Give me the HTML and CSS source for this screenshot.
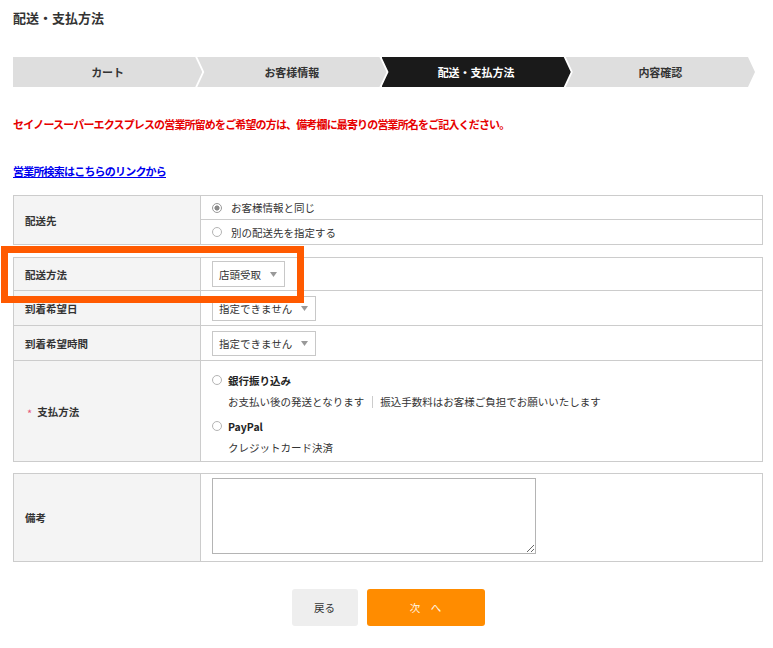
FILE: index.html
```html
<!DOCTYPE html>
<html lang="ja">
<head>
<meta charset="utf-8">
<title>配送・支払方法</title>
<link rel="stylesheet" href="styles.css">
</head>
<body>
<div class="page">
  <h1 class="page-title">配送・支払方法</h1>

  <ol class="steps">
    <li class="step">カート</li>
    <li class="step">お客様情報</li>
    <li class="step is-current">配送・支払方法</li>
    <li class="step">内容確認</li>
  </ol>

  <p class="notice">セイノースーパーエクスプレスの営業所留めをご希望の方は、備考欄に最寄りの営業所名をご記入ください。</p>

  <p class="link-line"><a class="office-link" href="#">営業所検索はこちらのリンクから</a></p>

  <div class="ftable ftable-dest">
    <div class="th">配送先</div>
    <div class="td td-options">
      <label class="opt opt-split"><span class="radio is-checked"></span>お客様情報と同じ</label>
      <label class="opt"><span class="radio"></span>別の配送先を指定する</label>
    </div>
  </div>

  <div class="ftable ftable-main">
    <div class="th">配送方法</div>
    <div class="td">
      <div class="select select-tall"><span>店頭受取</span><svg class="caret" width="7" height="5" viewBox="0 0 7 5"><path d="M0 0h7L3.5 5z" fill="#999"/></svg></div>
    </div>
    <div class="th">到着希望日</div>
    <div class="td">
      <div class="select"><span>指定できません</span><svg class="caret" width="7" height="5" viewBox="0 0 7 5"><path d="M0 0h7L3.5 5z" fill="#999"/></svg></div>
    </div>
    <div class="th">到着希望時間</div>
    <div class="td">
      <div class="select"><span>指定できません</span><svg class="caret" width="7" height="5" viewBox="0 0 7 5"><path d="M0 0h7L3.5 5z" fill="#999"/></svg></div>
    </div>
    <div class="th"><span class="req">*</span>支払方法</div>
    <div class="td td-pay">
      <div class="pay">
        <label class="pay-title"><span class="radio"></span>銀行振り込み</label>
        <p class="pay-desc">お支払い後の発送となります<span class="sep"></span>振込手数料はお客様ご負担でお願いいたします</p>
      </div>
      <div class="pay">
        <label class="pay-title"><span class="radio"></span>PayPal</label>
        <p class="pay-desc">クレジットカード決済</p>
      </div>
    </div>
  </div>

  <div class="ftable ftable-note">
    <div class="th">備考</div>
    <div class="td td-note"><textarea class="note"></textarea></div>
  </div>

  <div class="actions">
    <button class="btn btn-back" type="button">戻る</button>
    <button class="btn btn-next" type="button">次　へ</button>
  </div>

  <div class="highlight"></div>
</div>
</body>
</html>
```

FILE: styles.css
```css
html, body {
  margin: 0;
  padding: 0;
  background: #fff;
}

body {
  font-family: "Noto Sans CJK JP", "Noto Sans", sans-serif;
  font-size: 10.5px;
  color: #333;
}

.page {
  position: relative;
  padding: 0 10px 40px 13px;
}

.page-title {
  margin: 0;
  padding-top: 8px;
  font-size: 13px;
  line-height: 20px;
  font-weight: bold;
  color: #333;
}

/* steps */
.steps {
  list-style: none;
  display: flex;
  height: 30px;
  margin: 29px 8px 0 0;
  padding: 0;
}

.step {
  flex: 1;
  display: flex;
  align-items: center;
  justify-content: center;
  margin-left: -5px;
  background: #dedede;
  color: #333;
  font-weight: bold;
  font-size: 11px;
  clip-path: polygon(0 0, calc(100% - 7px) 0, 100% 50%, calc(100% - 7px) 100%, 0 100%, 7px 50%);
}

.step:first-child {
  margin-left: 0;
  clip-path: polygon(0 0, calc(100% - 7px) 0, 100% 50%, calc(100% - 7px) 100%, 0 100%);
}

.step.is-current {
  background: #1a1a1a;
  color: #fff;
}

/* notice & link */
.notice {
  margin: 29px 0 0;
  font-size: 11px;
  line-height: 16px;
  font-weight: bold;
  color: #e60000;
  letter-spacing: -0.85px;
  white-space: nowrap;
}

.link-line {
  margin: 31px 0 0;
  font-size: 11px;
  line-height: 16px;
}

.office-link {
  color: #0000ee;
  font-weight: bold;
  letter-spacing: -0.8px;
  text-decoration: underline;
}

/* form tables */
.ftable {
  display: grid;
  grid-template-columns: 187px 1fr;
  border: 1px solid #ccc;
  border-bottom: none;
}

.ftable-dest {
  margin-top: 16px;
  grid-template-rows: 49px;
}

.ftable-main {
  margin-top: 12px;
  grid-template-rows: 33px 35px 35px 101px;
}

.ftable-note {
  margin-top: 11px;
  grid-template-rows: 88px;
}

.th,
.td {
  box-sizing: border-box;
  border-bottom: 1px solid #ccc;
}

.th {
  display: flex;
  align-items: center;
  padding-left: 11px;
  background: #f4f4f4;
  border-right: 1px solid #ccc;
  font-weight: bold;
  color: #333;
}

.td {
  display: flex;
  align-items: center;
  padding-left: 11px;
}

.td-options {
  flex-direction: column;
  align-items: stretch;
  padding-left: 0;
}

.opt {
  box-sizing: border-box;
  height: 24px;
  display: flex;
  align-items: center;
  gap: 9px;
  padding-left: 11px;
  color: #333;
}

.opt-split {
  border-bottom: 1px solid #ccc;
}

.radio {
  display: inline-block;
  flex: none;
  box-sizing: border-box;
  width: 10px;
  height: 10px;
  border: 1px solid #b4b4b4;
  border-radius: 50%;
  background: #fff;
}

.radio.is-checked {
  border-color: #9a9a9a;
  background: radial-gradient(circle, #8a8a8a 0 2.3px, #fff 2.8px);
}

.req {
  color: #e6587c;
  font-size: 11px;
  line-height: 1;
  padding-top: 5px;
  margin: 0 5px 0 2px;
  font-weight: normal;
}

/* selects */
.select {
  box-sizing: border-box;
  height: 25px;
  display: inline-flex;
  align-items: center;
  gap: 9px;
  padding: 0 7px 0 6px;
  border: 1px solid #c8c8c8;
  background: #fff;
  color: #333;
  margin-top: 1px;
}

.select-tall {
  height: 26px;
  margin-top: 0;
}

.caret {
  display: block;
}

/* payment */
.td-pay {
  flex-direction: column;
  align-items: flex-start;
  justify-content: flex-start;
  padding-top: 8px;
}

.pay + .pay {
  margin-top: 2px;
}

.pay-title {
  display: flex;
  align-items: center;
  gap: 6px;
  height: 22px;
  font-weight: bold;
  color: #222;
}

.pay-desc {
  margin: 0;
  padding-left: 16px;
  height: 22px;
  line-height: 22px;
  display: flex;
  align-items: center;
  color: #333;
  white-space: nowrap;
}

.sep {
  display: inline-block;
  width: 0;
  height: 12px;
  border-left: 1px solid #ccc;
  margin: 0 7px 0 8px;
}

/* note */
.td-note {
  align-items: flex-start;
  padding-top: 4px;
}

.note {
  box-sizing: border-box;
  width: 324px;
  height: 76px;
  margin: 0;
  border: 1px solid #b4b4b4;
  font-family: inherit;
  font-size: 11px;
}

/* actions */
.actions {
  display: flex;
  justify-content: center;
  gap: 9px;
  margin-top: 27px;
}

.btn {
  height: 37px;
  border: none;
  border-radius: 3px;
  font-family: inherit;
  font-size: 10.5px;
  cursor: pointer;
}

.btn-back {
  width: 66px;
  background: #eee;
  color: #333;
}

.btn-next {
  width: 118px;
  background: #ff8c00;
  color: #fff8ea;
}

/* annotation overlay */
.highlight {
  position: absolute;
  left: 1px;
  top: 246px;
  box-sizing: border-box;
  width: 303px;
  height: 57px;
  border: 7px solid #ff5a00;
  pointer-events: none;
}
```
